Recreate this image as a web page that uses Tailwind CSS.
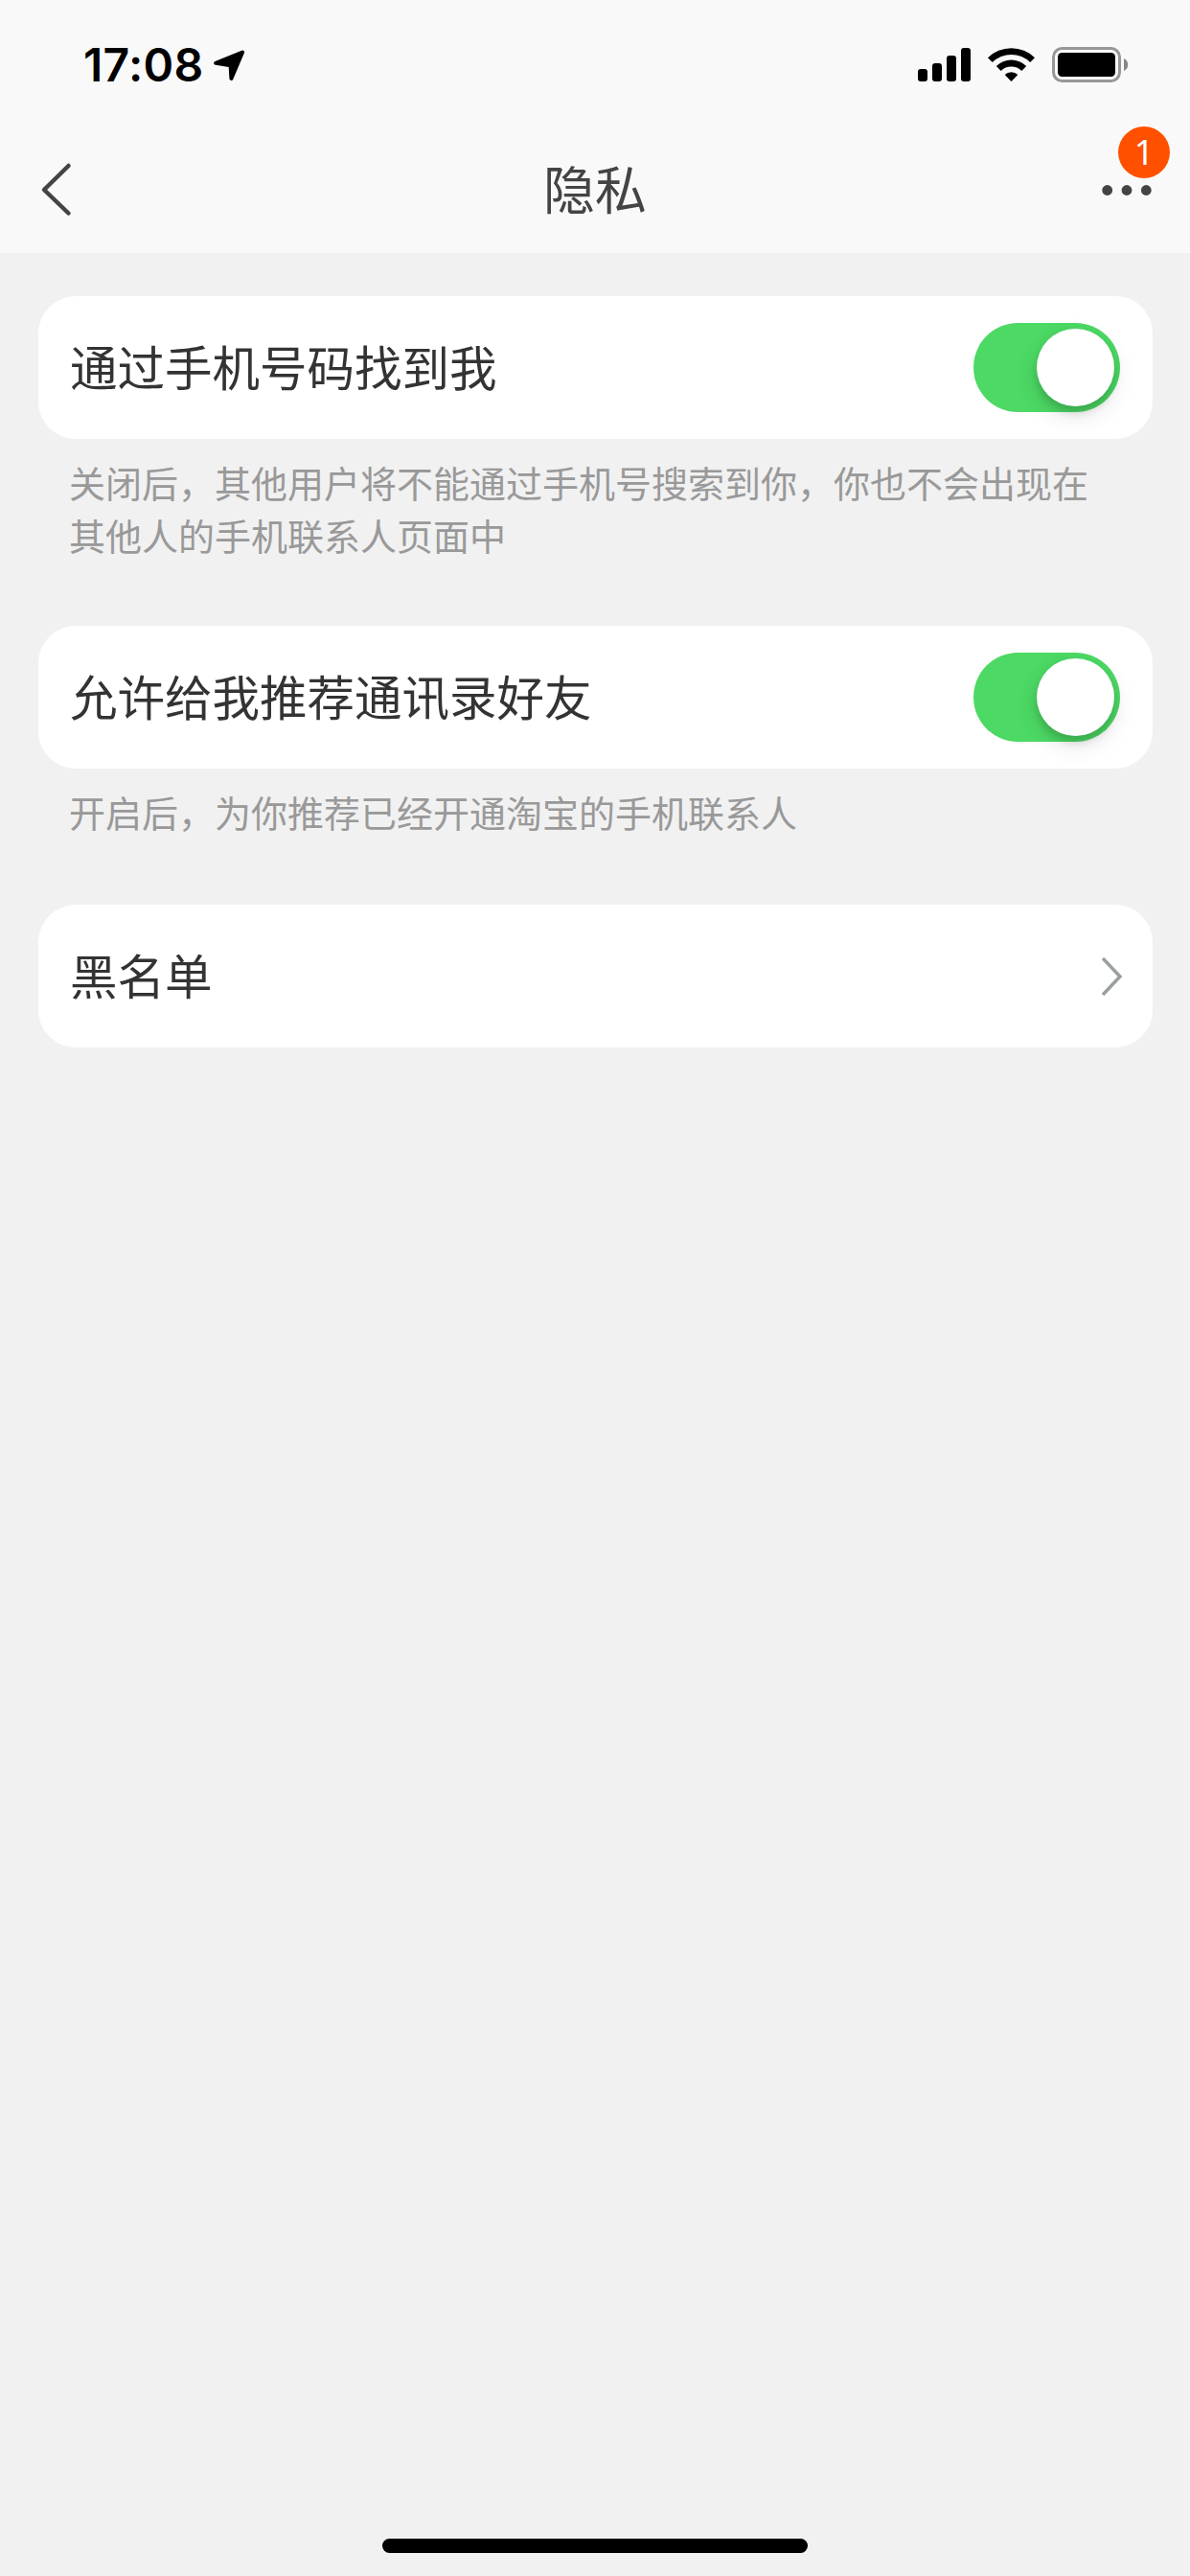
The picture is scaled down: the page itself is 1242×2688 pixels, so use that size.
<!DOCTYPE html>
<html lang="zh-CN">
  <head>
    <meta charset="UTF-8" />
    <meta name="viewport" content="width=device-width, initial-scale=1.0" />
    <title>隐私</title>
    <script src="https://cdn.jsdelivr.net/npm/@tailwindcss/browser@4"></script>
  </head>
  <body class="bg-[#f1f1f1] font-['Noto_Sans_CJK_SC',sans-serif]">
    <div class="flex flex-col w-[1242px] h-[2688px] overflow-hidden">
      <header class="h-[264px] shrink-0 bg-[#f9f9f9]">
        <!-- status bar -->
        <div class="flex items-center justify-between h-[135px] pl-[87px] pr-[64px]">
          <div class="flex items-center gap-[10px]">
            <span class="w-[126px] whitespace-nowrap font-['Inter',sans-serif] text-[48px] leading-[48px] font-semibold tracking-[0.3px] text-black">17:08</span>
            <svg class="w-[34px] h-[34px]" viewBox="0 0 34 34">
              <path d="M2.2 14.8 30 3.6 18.4 31 17.6 17.2Z" fill="#000" stroke="#000" stroke-width="4" stroke-linejoin="round" />
            </svg>
          </div>
          <svg class="w-[220px] h-[38px]" viewBox="958 49 220 38">
            <rect x="958" y="72" width="10" height="13" rx="3" />
            <rect x="973" y="66" width="10" height="19" rx="3" />
            <rect x="988" y="58" width="10" height="27" rx="3" />
            <rect x="1003" y="50" width="10" height="35" rx="3" />
            <path d="M1031 60.2A35 35 0 0 1 1080 60.2L1075.2 65A28 28 0 0 0 1035.8 65Z" />
            <path d="M1039.8 69A22.5 22.5 0 0 1 1071.2 69L1066.3 74A15.5 15.5 0 0 0 1044.7 74Z" />
            <path d="M1048.7 78A10 10 0 0 1 1062.3 78L1055.5 85Z" />
            <rect x="1099.5" y="50.5" width="69" height="34" rx="9" fill="none" stroke="#979797" stroke-width="3" />
            <rect x="1104" y="55" width="60" height="25" rx="4.5" />
            <path d="M1173 61Q1177.2 63 1177.2 67.5T1173 74Z" fill="#878787" />
          </svg>
        </div>
        <!-- title bar -->
        <div class="relative grid grid-cols-3 items-center h-[126px]">
          <svg class="ml-[40px] w-[36px] h-[58px]" viewBox="0 0 36 58" fill="none" stroke="#444" stroke-width="4.5" stroke-linecap="round" stroke-linejoin="round">
            <path d="M31.5 4 6 29 31.5 53.5" />
          </svg>
          <h1 class="pb-[5px] text-center text-[54px] leading-[54px] font-normal text-[#444]">隐私</h1>
          <svg class="justify-self-end mr-[38px] w-[54px] h-[14px]" viewBox="0 0 54 14" fill="#444">
            <circle cx="5.7" cy="7.5" r="5.4" />
            <circle cx="26" cy="7.5" r="5.4" />
            <circle cx="46.3" cy="7.5" r="5.4" />
          </svg>
          <span class="absolute right-[21px] -top-[3px] flex items-center justify-center w-[54px] h-[54px] rounded-full bg-[#ff5000] text-white font-['Noto_Sans',sans-serif] text-[36px] leading-[54px]">1</span>
        </div>
      </header>

      <main class="flex-1 pl-[40px] pr-[39px] pt-[45px]">
        <section class="h-[344px]">
          <div class="flex items-center justify-between h-[149px] pl-[33px] pr-[34px] bg-white rounded-[39px]">
            <span class="pb-[3px] text-[49.5px] text-[#333]">通过手机号码找到我</span>
            <button role="switch" aria-checked="true" class="flex items-center justify-end w-[153px] h-[93px] pr-[6px] rounded-full bg-[#4cd964]">
              <span class="w-[81px] h-[81px] rounded-full bg-white shadow-[0_9px_24px_rgba(0,0,0,0.12),0_6px_8px_rgba(0,0,0,0.14)]"></span>
            </button>
          </div>
          <p class="pt-[17px] pl-[32px] pr-[60px] text-[38px] leading-[55px] text-[#999]">关闭后，其他用户将不能通过手机号搜索到你，你也不会出现在<br />其他人的手机联系人页面中</p>
        </section>

        <section class="h-[291px]">
          <div class="flex items-center justify-between h-[149px] pl-[33px] pr-[34px] bg-white rounded-[39px]">
            <span class="pb-[3px] text-[49.5px] text-[#333]">允许给我推荐通讯录好友</span>
            <button role="switch" aria-checked="true" class="flex items-center justify-end w-[153px] h-[93px] pr-[6px] rounded-full bg-[#4cd964]">
              <span class="w-[81px] h-[81px] rounded-full bg-white shadow-[0_9px_24px_rgba(0,0,0,0.12),0_6px_8px_rgba(0,0,0,0.14)]"></span>
            </button>
          </div>
          <p class="pt-[17px] pl-[32px] text-[38px] leading-[55px] text-[#999]">开启后，为你推荐已经开通淘宝的手机联系人</p>
        </section>

        <a href="#" class="flex items-center justify-between h-[149px] pl-[33px] pr-[31px] bg-white rounded-[39px]">
          <span class="pb-[3px] text-[49.5px] text-[#333]">黑名单</span>
          <svg class="w-[22px] h-[40px]" viewBox="0 0 22 40" fill="none" stroke="#999f9b" stroke-width="3.5">
            <path d="M1 1 19 20 1 39" />
          </svg>
        </a>
      </main>

      <!-- home indicator -->
      <div class="mx-auto mb-[24px] w-[444px] h-[15px] shrink-0 rounded-full bg-black"></div>
    </div>
  </body>
</html>
